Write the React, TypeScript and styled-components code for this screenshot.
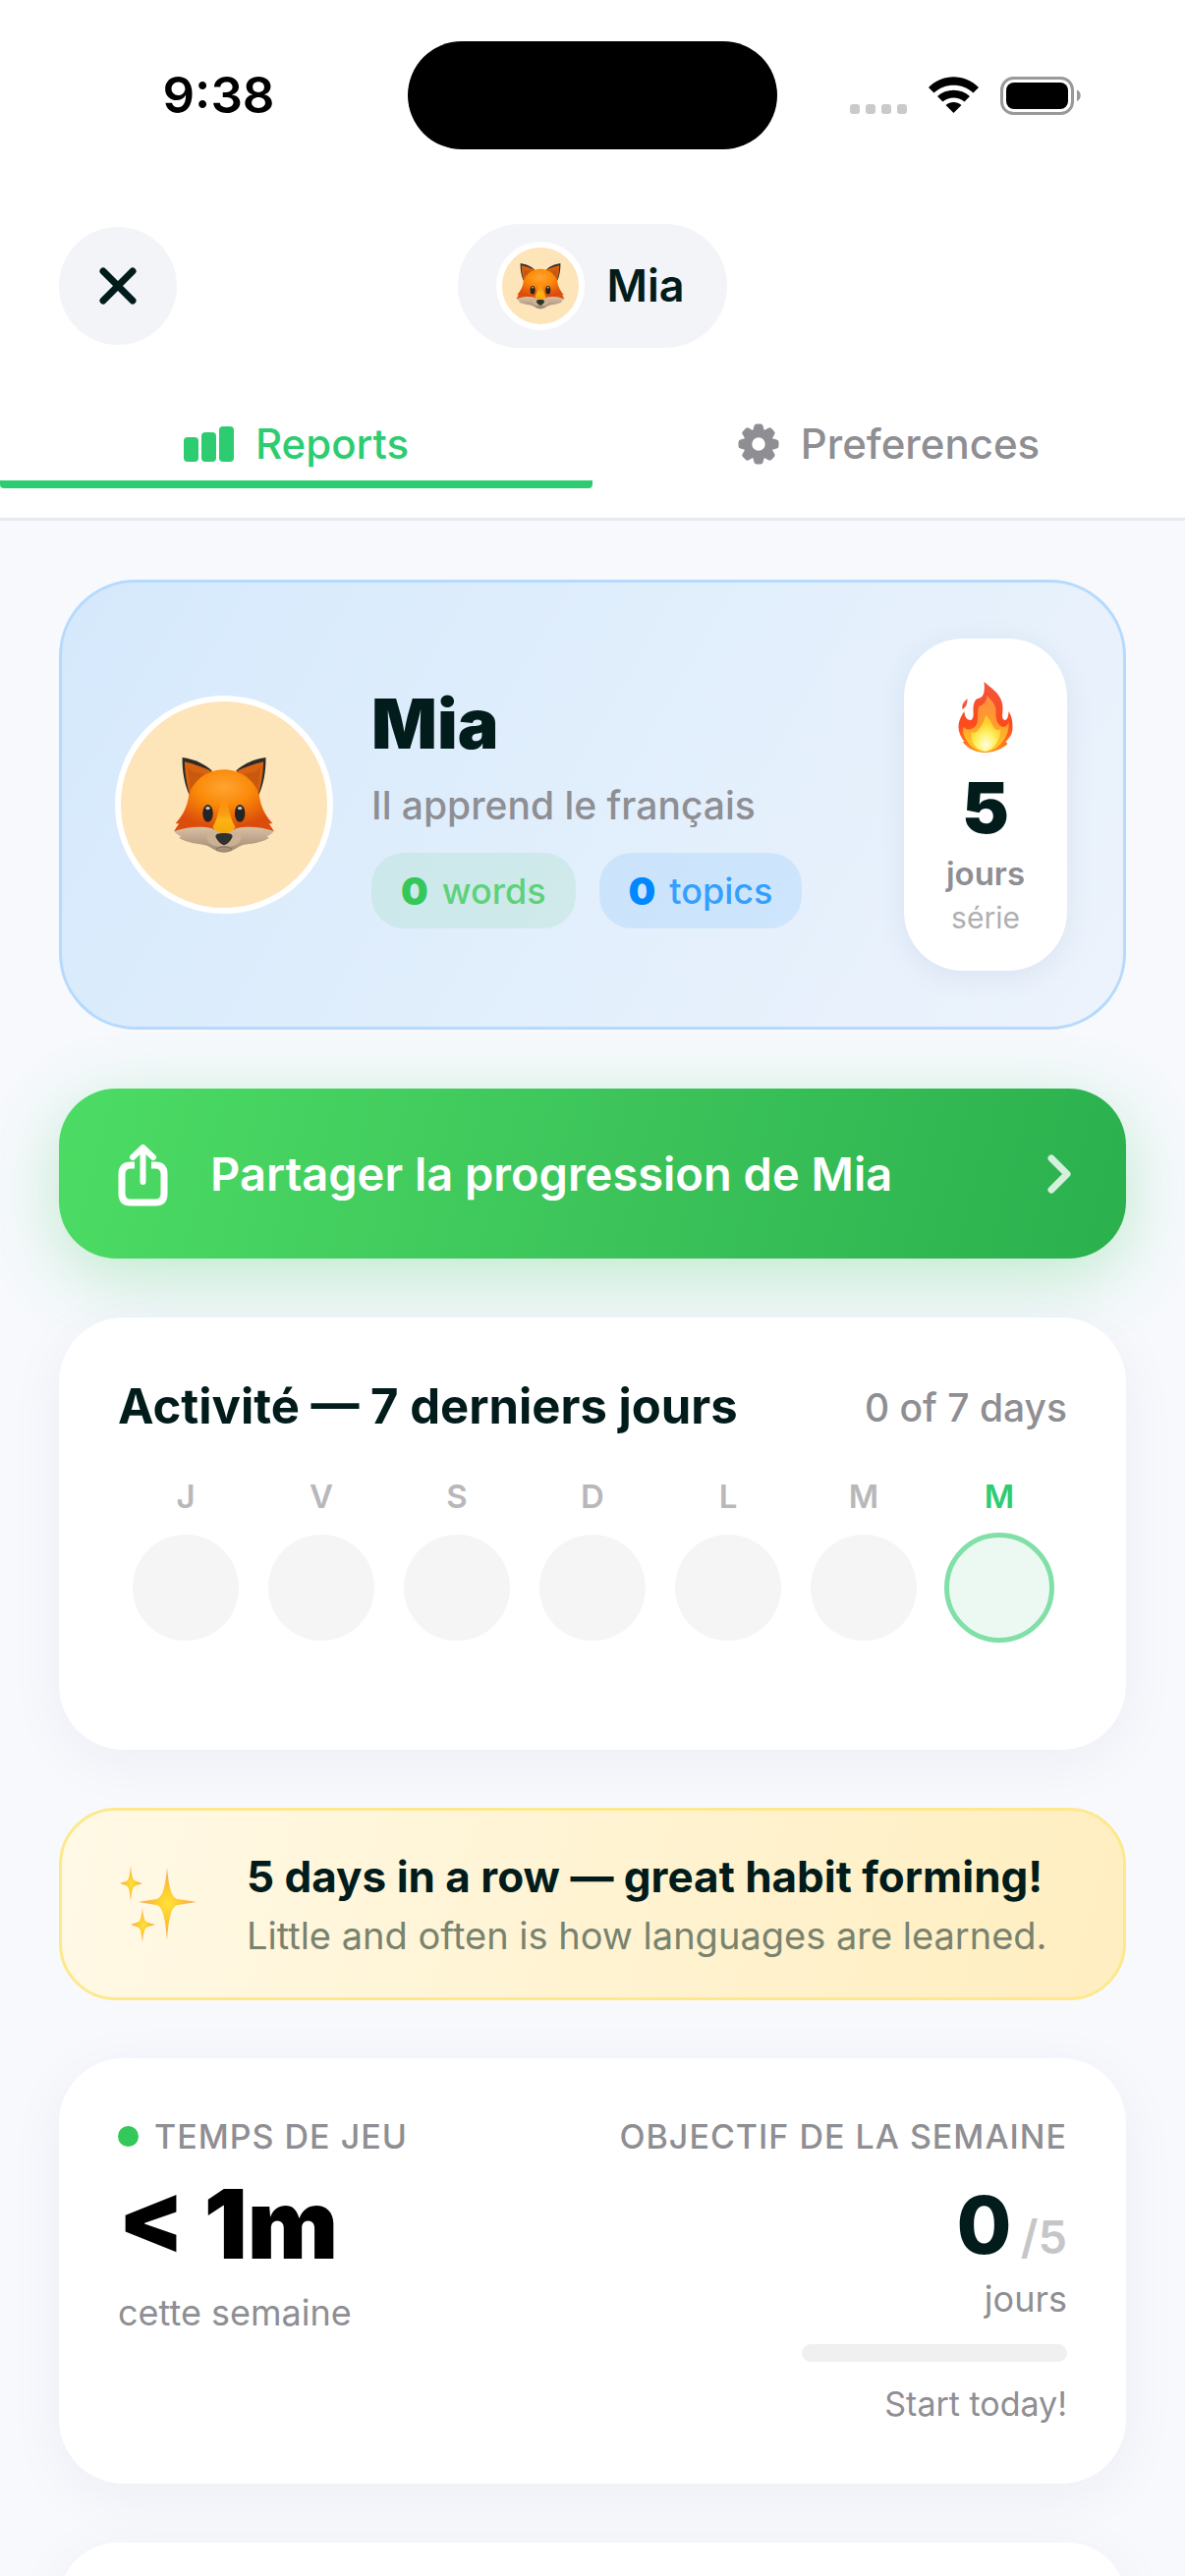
import React from "react";
import styled, { createGlobalStyle } from "styled-components";

const ink = "#021c1c";
const muted = "#8e8e93";
const green = "#2ecc71";

const Global = createGlobalStyle`
  * { box-sizing: border-box; }
  body {
    margin: 0;
    background: #f7f9fd;
    color: ${ink};
    font-family: Inter, "Liberation Sans", sans-serif;
  }
  button { font: inherit; color: inherit; border: 0; padding: 0; cursor: pointer; }
  h1, h2, p { margin: 0; }
  svg { display: block; flex: none; }
`;

const Screen = styled.div`
  height: 100vh;
  overflow: hidden;
`;

const Header = styled.header`
  background: #fff;
  border-bottom: 3px solid #e8e9ef;
  padding-bottom: 30px;
`;

const StatusBar = styled.div`
  display: grid;
  grid-template-columns: 1fr 376px 1fr;
  padding: 42px 0 76px;
`;

const Clock = styled.time`
  align-self: center;
  justify-self: center;
  padding-left: 30px;
  font-size: 51px;
  line-height: 62px;
  font-weight: 600;
  color: #000;
`;

const Island = styled.div`
  height: 110px;
  border-radius: 55px;
  background: #000;
`;

const StatusIcons = styled.div`
  display: flex;
  align-items: center;
  justify-content: center;
  align-self: center;
  gap: 22px;
  padding-right: 32px;
`;

const TopBar = styled.div`
  display: grid;
  grid-template-columns: 120px 1fr 120px;
  align-items: center;
  padding: 0 60px;
`;

const CloseButton = styled.button`
  display: grid;
  place-items: center;
  width: 120px;
  height: 120px;
  border-radius: 50%;
  background: #f2f4f8;
`;

const ProfilePill = styled.button`
  display: flex;
  align-items: center;
  justify-self: center;
  gap: 22px;
  height: 126px;
  padding: 0 43px 0 39px;
  border-radius: 63px;
  background: #f2f4f8;
  font-size: 45px;
  font-weight: 600;
  line-height: 54px;
`;

const Avatar = styled.span<{ $size: number }>`
  display: grid;
  place-items: center;
  flex: none;
  width: ${(p) => p.$size}px;
  height: ${(p) => p.$size}px;
  border: 6px solid #fff;
  border-radius: 50%;
  background: #fde4b9;
`;

const Tabs = styled.div`
  display: grid;
  grid-template-columns: 1fr 1fr;
  padding-top: 60px;
`;

const Tab = styled.button<{ $active?: boolean }>`
  display: flex;
  align-items: center;
  justify-content: center;
  gap: 22px;
  height: 83px;
  padding-bottom: 8px;
  background: linear-gradient(${(p) => (p.$active ? green : "transparent")} 0 0) bottom / 100% 8px no-repeat;
  border-radius: 4px;
  color: ${(p) => (p.$active ? green : muted)};
  font-size: 42px;
  font-weight: 500;
  line-height: 54px;
`;

const Content = styled.main`
  display: flex;
  flex-direction: column;
  gap: 60px;
  padding: 60px;
`;

const Hero = styled.section`
  display: flex;
  align-items: center;
  gap: 39px;
  padding: 57px 57px 57px 54px;
  border: 3px solid #b5dafd;
  border-radius: 78px;
  background: linear-gradient(120deg, #d5e9fc, #e0eefc 45%, #edf3fc);
`;

const HeroInfo = styled.div`
  flex: 1;
`;

const HeroName = styled.h1`
  font-size: 70px;
  font-weight: 900;
  line-height: 87px;
`;

const HeroText = styled.p`
  padding: 16px 0 24px;
  font-size: 39px;
  font-weight: 500;
  line-height: 48px;
  color: ${muted};
`;

const Chips = styled.div`
  display: flex;
  gap: 24px;
`;

const Chip = styled.span<{ $color: string; $text: string; $bg: string }>`
  display: flex;
  align-items: center;
  gap: 14px;
  height: 77px;
  padding: 0 30px;
  border-radius: 33px;
  background: ${(p) => p.$bg};
  color: ${(p) => p.$text};
  font-size: 36px;
  font-weight: 500;

  strong {
    color: ${(p) => p.$color};
    font-size: 39px;
    font-weight: 900;
  }
`;

const Streak = styled.div`
  display: flex;
  flex-direction: column;
  align-items: center;
  width: 166px;
  padding: 44px 0 35px;
  border-radius: 60px;
  background: #fff;
  box-shadow: 0 6px 30px rgba(40, 60, 110, 0.08);
`;

const StreakCount = styled.strong`
  padding-top: 14px;
  font-size: 72px;
  font-weight: 900;
  line-height: 84px;
`;

const StreakUnit = styled.span`
  padding: 5px 0 6px;
  font-size: 33px;
  font-weight: 600;
  line-height: 40px;
  color: ${muted};
`;

const StreakLabel = styled.span`
  font-size: 30px;
  line-height: 38px;
  color: #afafb2;
`;

const ShareButton = styled.button`
  display: flex;
  align-items: center;
  gap: 42px;
  height: 173px;
  padding: 0 54px 0 60px;
  border-radius: 58px;
  background: linear-gradient(105deg, #4cdc64, #3dc55b 50%, #2ab04d);
  box-shadow: 0 18px 72px rgba(52, 199, 89, 0.3);
  color: #fff;
  font-size: 47px;
  font-weight: 600;
  text-align: left;

  span { flex: 1; }
`;

const Card = styled.section<{ $bottom?: number }>`
  padding: 60px 60px ${(p) => p.$bottom ?? 60}px;
  border-radius: 66px;
  background: #fff;
  box-shadow: 0 12px 60px rgba(40, 40, 80, 0.05);
`;

const CardHead = styled.div`
  display: flex;
  align-items: center;
  justify-content: space-between;
`;

const CardTitle = styled.h2`
  font-size: 49px;
  font-weight: 700;
  line-height: 62px;
`;

const CardNote = styled.span`
  font-size: 39px;
  font-weight: 500;
  color: ${muted};
`;

const Week = styled.div`
  display: grid;
  grid-template-columns: repeat(7, 1fr);
  padding-top: 41px;
`;

const Day = styled.div<{ $today: boolean }>`
  display: flex;
  flex-direction: column;
  align-items: center;
  gap: 19px;
  color: ${(p) => (p.$today ? green : "#b8b8bb")};
  font-size: 33px;
  font-weight: 600;
  line-height: 39px;
`;

const Dot = styled.span<{ $today: boolean }>`
  width: 108px;
  height: 108px;
  border-radius: 50%;
  background: ${(p) => (p.$today ? "#ecf9f2" : "#f5f5f6")};
  outline: ${(p) => (p.$today ? "5px solid #80e0a8" : "none")};
  outline-offset: -3px;
`;

const Banner = styled.section`
  display: flex;
  align-items: center;
  gap: 50px;
  margin: -1px 0;
  padding: 38px 57px 38px 58px;
  border: 3px solid #fde98c;
  border-radius: 58px;
  background: linear-gradient(105deg, #fff9e6, #fff3d2 50%, #ffeec0);
`;

const BannerTitle = styled.h2`
  font-size: 44px;
  font-weight: 700;
  line-height: 58px;
`;

const BannerText = styled.p`
  padding-top: 6px;
  font-size: 38px;
  line-height: 50px;
  color: #78836f;
`;

const Stats = styled(Card)`
  display: flex;
  justify-content: space-between;
`;

const Stat = styled.div<{ $end?: boolean }>`
  display: flex;
  flex-direction: column;
  align-items: ${(p) => (p.$end ? "flex-end" : "flex-start")};
`;

const StatLabel = styled.h2`
  display: flex;
  align-items: center;
  gap: 16px;
  font-size: 34px;
  font-weight: 500;
  letter-spacing: 1px;
  line-height: 39px;
  color: ${muted};
`;

const GreenDot = styled.span`
  width: 21px;
  height: 21px;
  border-radius: 50%;
  background: #34c759;
`;

const PlayTime = styled.strong`
  padding: 16px 0 13px;
  color: #000;
  font-size: 98px;
  font-weight: 900;
  line-height: 108px;
`;

const Caption = styled.span`
  font-size: 36px;
  line-height: 46px;
  color: ${muted};
`;

const Goal = styled.div`
  display: flex;
  align-items: baseline;
  gap: 9px;
  padding: 26px 0 7px;
  line-height: 50px;
  font-size: 47px;
  font-weight: 600;
  color: #c6c6c9;

  strong {
    color: ${ink};
    font-size: 81px;
    font-weight: 800;
    line-height: 90px;
  }
`;

const Track = styled.div`
  width: 270px;
  height: 18px;
  margin: 23px 0 22px;
  border-radius: 9px;
  background: #f0f0f1;
`;

const Hint = styled.span`
  font-size: 34px;
  line-height: 42px;
  color: ${muted};
`;

function Fox({ size }: { size: number }) {
  return (
    <svg width={size} height={size} viewBox="45 80 316 316" aria-hidden="true">
      <defs>
        <radialGradient id="foxFace" cx="0.5" cy="0.28" r="0.62">
          <stop offset="0" stopColor="#ffa432" />
          <stop offset="0.45" stopColor="#fb8a08" />
          <stop offset="1" stopColor="#dc4d0b" />
        </radialGradient>
        <linearGradient id="foxNose" x1="0" y1="0" x2="0" y2="1">
          <stop offset="0" stopColor="#ffa01c" stopOpacity="0" />
          <stop offset="0.6" stopColor="#fdb414" />
          <stop offset="1" stopColor="#f6a608" />
        </linearGradient>
        <linearGradient id="foxMuzzle" x1="0" y1="0" x2="0" y2="1">
          <stop offset="0" stopColor="#dcc0a4" />
          <stop offset="1" stopColor="#9c8872" />
        </linearGradient>
      </defs>
      <path d="M74 92C112 97 146 114 166 133L96 208C80 176 73 130 74 92Z" fill="#2c2b29" />
      <path d="M332 92C294 97 260 114 240 133L310 208C326 176 333 130 332 92Z" fill="#2c2b29" />
      <path d="M81 105C112 112 142 124 163 134L97 206C88 178 82 144 81 105Z" fill="#d9620f" />
      <path d="M325 105C294 112 264 124 243 134L309 206C318 178 324 144 325 105Z" fill="#d9620f" />
      <path d="M90 118C100 140 118 140 140 142L98 190Z" fill="#b9500e" opacity="0.5" />
      <path d="M316 118C306 140 288 140 266 142L308 190Z" fill="#b9500e" opacity="0.5" />
      <path d="M203 129C256 129 300 165 312 210C316 242 330 272 353 296L342 297C347 304 351 308 357 320L340 326H66L49 320C55 308 59 304 64 297L53 296C76 272 90 242 94 210C106 165 150 129 203 129Z" fill="url(#foxFace)" />
      <path d="M203 215C221 240 219 280 238 306L226 330H180L168 306C187 280 185 240 203 215Z" fill="url(#foxNose)" />
      <path d="M48 320C88 306 134 304 160 310C176 314 184 326 203 326C222 326 230 314 246 310C272 304 318 306 358 320C352 327 345 332 336 336L342 341C316 358 278 358 258 364C238 372 226 386 203 386C180 386 168 372 148 364C128 358 90 358 64 341L70 336C61 332 54 327 48 320Z" fill="url(#foxMuzzle)" />
      <path d="M177 328C160 312 146 324 151 346C158 366 186 370 203 366C220 370 248 366 255 346C260 324 246 312 229 328Z" fill="#ceb496" opacity="0.85" />
      <path d="M178 376C190 366 216 366 228 376" fill="none" stroke="#7d6a58" strokeWidth="3" />
      <path d="M203 326C220 326 230 329 229 337C226 348 212 363 203 363C194 363 180 348 177 337C176 329 186 326 203 326Z" fill="#30302c" />
      <ellipse cx="153" cy="265" rx="16" ry="27" fill="#262524" />
      <ellipse cx="252" cy="265" rx="16" ry="27" fill="#262524" />
      <ellipse cx="153" cy="249" rx="7" ry="5" fill="#c8c8c8" />
      <ellipse cx="252" cy="249" rx="7" ry="5" fill="#c8c8c8" />
    </svg>
  );
}

function Flame() {
  return (
    <svg width="56" height="72" viewBox="0 0 55 72" aria-hidden="true">
      <defs>
        <linearGradient id="flameOuter" x1="0" y1="0" x2="0" y2="1">
          <stop offset="0" stopColor="#f2563f" />
          <stop offset="0.6" stopColor="#fc4a1c" />
          <stop offset="1" stopColor="#ff8a1e" />
        </linearGradient>
        <linearGradient id="flameMid" x1="0" y1="0" x2="0" y2="1">
          <stop offset="0" stopColor="#ff8e3c" />
          <stop offset="0.5" stopColor="#ff9b2e" />
          <stop offset="1" stopColor="#ffd21f" />
        </linearGradient>
        <radialGradient id="flameCore" cx="0.5" cy="0.8" r="0.6">
          <stop offset="0" stopColor="#fffde0" />
          <stop offset="0.5" stopColor="#fff36a" />
          <stop offset="1" stopColor="#ffd02c" />
        </radialGradient>
      </defs>
      <path d="M26 0C34 7 45 13 45 27C45 33 43 37 47 39C50 39 51 34 51 30C55 36 55 42 55 47C55 54 51 58 48 61L50 63C44 69 35 72 27 72C18 72 9 68 4 61L6 61C2 56 0 51 0 46C0 40 3 34 6 30C6 36 9 39 12 39C16 38 15 32 15 28C15 22 17 17 20 17C26 16 27 9 26 0Z" fill="url(#flameOuter)" />
      <path d="M9 17C9 24 7 26 4 28C3 23 5 21 9 17Z" fill="#f2563f" />
      <path d="M29 14C33 19 38 22 38 29C38 36 38 43 45 46C49 46 50 43 51 41C52 50 48 57 44 62C39 68 33 71 27 71C19 71 12 66 9 61C5 55 4 51 5 46C8 50 15 49 18 44C21 39 18 31 21 25C26 23 29 19 29 14Z" fill="url(#flameMid)" />
      <path d="M28 34C33 39 34 44 37 48C40 50 42 49 43 48C43 58 37 69 27 71C17 69 11 60 13 51C16 53 19 51 21 48C25 43 26 38 28 34Z" fill="url(#flameCore)" />
    </svg>
  );
}

function Sparkles() {
  return (
    <svg width="80" height="78" viewBox="0 0 80 78" aria-hidden="true">
      <defs>
        <radialGradient id="spark">
          <stop offset="0" stopColor="#ffe23c" />
          <stop offset="0.4" stopColor="#fdcb2e" />
          <stop offset="1" stopColor="#f9a05a" />
        </radialGradient>
      </defs>
      <path d="M49 2C51 24 54 33 60 34L79 37L60 40C54 41 51 50 49 76C47 50 44 41 38 40L20 37L38 34C44 33 47 24 49 2Z" fill="url(#spark)" />
      <path d="M12 0C13 11 14 15 18 16L24 18L18 20C14 21 13 25 12 36C11 25 10 21 7 20L1 18L7 16C10 15 11 11 12 0Z" fill="url(#spark)" />
      <path d="M24 43C25 53 26 57 30 58L37 60L30 62C26 63 25 68 24 78C23 68 22 63 18 62L12 60L18 58C22 57 23 53 24 43Z" fill="url(#spark)" />
    </svg>
  );
}

function Signal() {
  return (
    <svg width="58" height="38" viewBox="0 0 58 38" fill="#cacaca" aria-hidden="true">
      <rect x="0" y="28" width="10" height="10" rx="3" />
      <rect x="16" y="28" width="10" height="10" rx="3" />
      <rect x="32" y="28" width="10" height="10" rx="3" />
      <rect x="48" y="28" width="10" height="10" rx="3" />
    </svg>
  );
}

function Wifi() {
  return (
    <svg width="51" height="38" viewBox="0 0 51 38" aria-hidden="true">
      <path d="M0 11C14 -3.500 37 -3.500 51 11L45.500 16.500C34.500 6 16.500 6 5.500 16.500Z" />
      <path d="M9 20C18 11.500 33 11.500 42 20L36.500 25.500C30 20 21 20 14.500 25.500Z" />
      <path d="M17.500 29C22 25 29 25 33.500 29L25.500 37Z" />
    </svg>
  );
}

function Battery() {
  return (
    <svg width="83" height="39" viewBox="0 0 83 39" aria-hidden="true">
      <rect x="1.500" y="1.500" width="72" height="36" rx="12" fill="none" stroke="#999" strokeWidth="3" />
      <rect x="6" y="6" width="63" height="27" rx="8" />
      <path d="M78 13.500C83 15.500 83 23 78 25Z" fill="#999" />
    </svg>
  );
}

function Cross() {
  return (
    <svg width="38" height="38" viewBox="0 0 38 38" stroke={ink} strokeWidth="7" strokeLinecap="round" aria-hidden="true">
      <path d="M4 4L34 34M34 4L4 34" />
    </svg>
  );
}

function Bars() {
  return (
    <svg width="51" height="36" viewBox="0 0 51 36" fill={green} aria-hidden="true">
      <rect x="0" y="11" width="15" height="25" rx="4" />
      <rect x="18" y="6" width="15" height="30" rx="4" />
      <rect x="36" y="0" width="15" height="36" rx="4" />
    </svg>
  );
}

function Gear() {
  return (
    <svg width="42" height="42" viewBox="-21 -21 42 42" fill={muted} aria-hidden="true">
      {[0, 45, 90, 135, 180, 225, 270, 315].map((a) => (
        <path
          key={a}
          transform={`rotate(${a})`}
          d="M-6 -13L-4.500 -18.500Q-4 -20.500 -2 -20.500H2Q4 -20.500 4.500 -18.500L6 -13Z"
        />
      ))}
      <circle r="11" fill="none" stroke={muted} strokeWidth="8.500" />
    </svg>
  );
}

function Share() {
  return (
    <svg width="52" height="66" viewBox="0 -2 52 66" fill="none" stroke="#fff" strokeWidth="6" aria-hidden="true">
      <path d="M17 22H13Q4 22 4 31V51Q4 60 13 60H38Q47 60 47 51V31Q47 22 38 22H34" strokeWidth="7" />
      <path d="M25.500 5V39M15 14L25.500 4L36 14" strokeLinecap="round" strokeLinejoin="round" />
    </svg>
  );
}

function Chevron() {
  return (
    <svg width="28" height="40" viewBox="0 0 28 40" fill="none" stroke="#fff" strokeOpacity="0.8" strokeWidth="7" strokeLinecap="round" strokeLinejoin="round" aria-hidden="true">
      <path d="M6 4L22 20L6 36" />
    </svg>
  );
}

const days = ["J", "V", "S", "D", "L", "M", "M"];

export default function App() {
  return (
    <Screen>
      <Global />
      <Header>
        <StatusBar>
          <Clock>9:38</Clock>
          <Island />
          <StatusIcons>
            <Signal />
            <Wifi />
            <Battery />
          </StatusIcons>
        </StatusBar>
        <TopBar>
          <CloseButton aria-label="Fermer">
            <Cross />
          </CloseButton>
          <ProfilePill>
            <Avatar $size={90}>
              <Fox size={50} />
            </Avatar>
            Mia
          </ProfilePill>
        </TopBar>
        <Tabs role="tablist">
          <Tab role="tab" aria-selected="true" $active>
            <Bars />
            Reports
          </Tab>
          <Tab role="tab" aria-selected="false">
            <Gear />
            Preferences
          </Tab>
        </Tabs>
      </Header>
      <Content>
        <Hero>
          <Avatar $size={222}>
            <Fox size={104} />
          </Avatar>
          <HeroInfo>
            <HeroName>Mia</HeroName>
            <HeroText>Il apprend le français</HeroText>
            <Chips>
              <Chip $color="#34c759" $text="#5dd27a" $bg="rgba(52, 199, 89, 0.1)">
                <strong>0</strong>words
              </Chip>
              <Chip $color="#0088ff" $text="#339fff" $bg="rgba(0, 136, 255, 0.1)">
                <strong>0</strong>topics
              </Chip>
            </Chips>
          </HeroInfo>
          <Streak>
            <Flame />
            <StreakCount>5</StreakCount>
            <StreakUnit>jours</StreakUnit>
            <StreakLabel>série</StreakLabel>
          </Streak>
        </Hero>

        <ShareButton>
          <Share />
          <span>Partager la progression de Mia</span>
          <Chevron />
        </ShareButton>

        <Card $bottom={111}>
          <CardHead>
            <CardTitle>Activité — 7 derniers jours</CardTitle>
            <CardNote>0 of 7 days</CardNote>
          </CardHead>
          <Week>
            {days.map((day, i) => (
              <Day key={i} $today={i === days.length - 1}>
                {day}
                <Dot $today={i === days.length - 1} />
              </Day>
            ))}
          </Week>
        </Card>

        <Banner>
          <Sparkles />
          <div>
            <BannerTitle>5 days in a row — great habit forming!</BannerTitle>
            <BannerText>Little and often is how languages are learned.</BannerText>
          </div>
        </Banner>

        <Stats>
          <Stat>
            <StatLabel>
              <GreenDot />
              TEMPS DE JEU
            </StatLabel>
            <PlayTime>&lt; 1m</PlayTime>
            <Caption>cette semaine</Caption>
          </Stat>
          <Stat $end>
            <StatLabel>OBJECTIF DE LA SEMAINE</StatLabel>
            <Goal>
              <strong>0</strong>/5
            </Goal>
            <Caption>jours</Caption>
            <Track role="progressbar" aria-valuemin={0} aria-valuemax={5} aria-valuenow={0} />
            <Hint>Start today!</Hint>
          </Stat>
        </Stats>

        <Card />
      </Content>
    </Screen>
  );
}
